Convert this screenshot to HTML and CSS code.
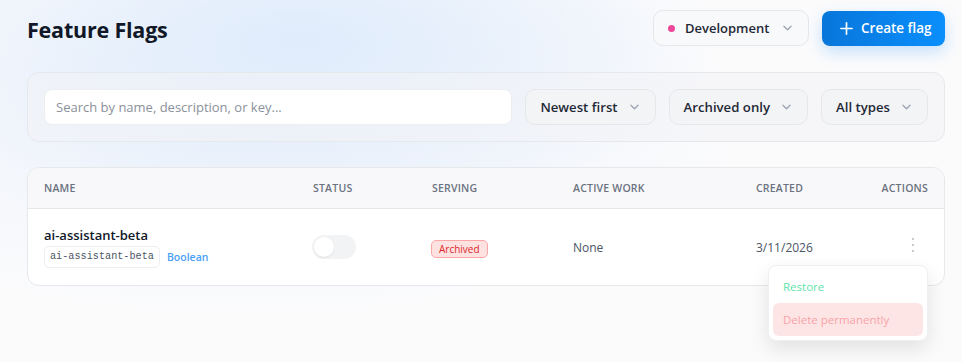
FILE: index.html
```html
<!DOCTYPE html>
<html lang="en">
<head>
    <meta charset="UTF-8">
    <meta name="viewport" content="width=device-width, initial-scale=1.0">
    <title>Feature Flags</title>
    <link rel="stylesheet" href="styles.css">
</head>
<body>
    <div class="page">
        <div class="page-header">
            <h1>Feature Flags</h1>
            <div class="header-actions">
                <button class="env-select">
                    <span class="env-dot"></span>
                    <span>Development</span>
                    <svg class="chev" viewBox="0 0 10 6"><path d="M1 1l4 4 4-4"/></svg>
                </button>
                <button class="btn-create">
                    <svg class="plus" viewBox="0 0 14 14"><path d="M7 1v12M1 7h12"/></svg>
                    Create flag
                </button>
            </div>
        </div>

        <div class="filters">
            <input class="search" type="text" placeholder="Search by name, description, or key...">
            <button class="filter-select">Newest first <svg class="chev" viewBox="0 0 10 6"><path d="M1 1l4 4 4-4"/></svg></button>
            <button class="filter-select">Archived only <svg class="chev" viewBox="0 0 10 6"><path d="M1 1l4 4 4-4"/></svg></button>
            <button class="filter-select">All types <svg class="chev" viewBox="0 0 10 6"><path d="M1 1l4 4 4-4"/></svg></button>
        </div>

        <div class="flags-card">
            <div class="flags-row flags-head">
                <div>Name</div>
                <div>Status</div>
                <div>Serving</div>
                <div>Active work</div>
                <div>Created</div>
                <div class="col-actions">Actions</div>
            </div>
            <div class="flags-row flag-item">
                <div class="flag-name">
                    <div class="name">ai-assistant-beta</div>
                    <div class="meta">
                        <code class="key">ai-assistant-beta</code>
                        <span class="type">Boolean</span>
                    </div>
                </div>
                <div><span class="toggle"><span class="knob"></span></span></div>
                <div><span class="badge-archived">Archived</span></div>
                <div class="muted">None</div>
                <div class="muted">3/11/2026</div>
                <div class="col-actions">
                    <svg class="kebab" viewBox="0 0 4 16"><circle cx="2" cy="2" r="1"/><circle cx="2" cy="8" r="1"/><circle cx="2" cy="14" r="1"/></svg>
                </div>
                <div class="row-menu">
                    <div class="menu-item restore">Restore</div>
                    <div class="menu-item danger">Delete permanently</div>
                </div>
            </div>
        </div>
    </div>
</body>
</html>
```

FILE: styles.css
```css
* {
    box-sizing: border-box;
    margin: 0;
    padding: 0;
    font-family: 'Open Sans', 'Noto Sans', sans-serif;
}

html, body {
    height: 100%;
}

body {
    background:
        radial-gradient(ellipse 420px 180px at 300px 40px, rgba(220, 234, 252, 0.85), rgba(220, 234, 252, 0) 100%),
        radial-gradient(ellipse 500px 200px at 250px 120px, rgba(226, 236, 250, 0.6), rgba(226, 236, 250, 0) 100%),
        #fbfbfc;
    color: #111827;
}

.page {
    padding: 10px 17px 0 27px;
}

.page-header {
    display: flex;
    justify-content: space-between;
    align-items: center;
    height: 36px;
}

.page-header h1 {
    font-size: 21.5px;
    font-weight: 700;
    color: #111827;
    letter-spacing: -0.2px;
    margin-top: 3px;
}

.header-actions {
    display: flex;
    gap: 13px;
    align-items: center;
}

button {
    border: none;
    background: none;
    cursor: pointer;
}

.chev {
    width: 9px;
    height: 6px;
    fill: none;
    stroke: #9ca3af;
    stroke-width: 1.4;
    stroke-linecap: round;
    stroke-linejoin: round;
}

.env-select {
    display: flex;
    align-items: center;
    height: 36px;
    width: 156px;
    padding: 0 16px 0 14px;
    background: #f8f9fa;
    border: 1px solid #e5e7eb;
    border-radius: 10px;
    font-size: 13px;
    font-weight: 600;
    color: #1f2937;
}

.env-dot {
    width: 7px;
    height: 7px;
    border-radius: 50%;
    background: #ec4899;
    margin-right: 10px;
}

.env-select .chev {
    margin-left: auto;
}

.btn-create {
    display: flex;
    align-items: center;
    gap: 8px;
    height: 35px;
    width: 123px;
    padding: 0 0 0 18px;
    border-radius: 8px;
    background: linear-gradient(90deg, #0876da, #0a8ffc);
    box-shadow: 0 6px 16px rgba(10, 130, 250, 0.22);
    color: #fff;
    font-size: 13.5px;
    font-weight: 600;
}

.plus {
    width: 13px;
    height: 13px;
    stroke: #fff;
    stroke-width: 1.8;
    stroke-linecap: round;
}

.filters {
    display: flex;
    gap: 13px;
    margin-top: 26px;
    padding: 16px;
    background: rgba(242, 243, 245, 0.55);
    border: 1px solid #e6e8eb;
    border-radius: 12px;
}

.search {
    flex: 1;
    height: 36px;
    padding: 0 11px;
    border: 1px solid #eceef1;
    border-radius: 8px;
    background: #fff;
    font-size: 13px;
    color: #111827;
    outline: none;
}

.search::placeholder {
    color: #8b919b;
}

.filter-select {
    display: flex;
    align-items: center;
    gap: 12px;
    height: 36px;
    padding: 0 16px 0 14px;
    background: #f3f4f6;
    border: 1px solid #e5e7eb;
    border-radius: 10px;
    font-size: 13.2px;
    font-weight: 600;
    color: #1f2937;
}

.flags-card {
    margin-top: 25px;
    border: 1px solid #e6e8eb;
    border-radius: 12px;
    background: #fff;
}

.flags-row {
    display: grid;
    grid-template-columns: 269px 119px 141px 183px 1fr 60px;
    align-items: center;
    padding: 0 16px;
}

.flags-head {
    height: 41px;
    background: rgba(243, 244, 246, 0.6);
    border-bottom: 1px solid #e5e7eb;
    border-radius: 12px 12px 0 0;
    font-size: 10.5px;
    font-weight: 600;
    color: #6b7280;
    text-transform: uppercase;
    letter-spacing: 0.2px;
}

.col-actions {
    text-align: right;
}

.flag-item {
    position: relative;
    height: 76px;
}

.flag-name .name {
    font-size: 13px;
    font-weight: 600;
    color: #111827;
}

.flag-name .meta {
    display: flex;
    align-items: center;
    gap: 7px;
    margin-top: 2px;
}

.key {
    font-family: 'Liberation Mono', 'DejaVu Sans Mono', monospace;
    font-size: 10.2px;
    color: #4b5563;
    padding: 4px 5px 5px;
    border: 1px solid #eceef1;
    border-radius: 5px;
    background: #fff;
}

.type {
    font-size: 10.5px;
    font-weight: 600;
    color: #4a9ff5;
}

.toggle {
    display: block;
    width: 44px;
    height: 24px;
    border-radius: 12px;
    background: #f2f3f5;
    position: relative;
    margin-left: -1px;
}

.knob {
    position: absolute;
    top: 2px;
    left: 2px;
    width: 20px;
    height: 20px;
    border-radius: 50%;
    background: #fff;
    box-shadow: 0 1px 2px rgba(0, 0, 0, 0.08);
}

.badge-archived {
    display: inline-block;
    padding: 1px 7px;
    margin-left: -1px;
    font-size: 10px;
    font-weight: 500;
    color: #dc2626;
    background: #fee2e2;
    border: 1px solid #fca5a5;
    border-radius: 5px;
}

.muted {
    font-size: 12px;
    color: #4b5563;
}

.kebab {
    width: 4px;
    height: 16px;
    fill: #b4b9c1;
    margin-right: 13px;
}

.row-menu {
    position: absolute;
    top: 56px;
    right: 16px;
    width: 160px;
    padding: 4px;
    background: #fff;
    border: 1px solid #eef0f2;
    border-radius: 8px;
    box-shadow: 0 8px 20px rgba(0, 0, 0, 0.1);
    z-index: 2;
}

.menu-item {
    height: 33px;
    display: flex;
    align-items: center;
    padding: 0 10px;
    font-size: 11.5px;
    border-radius: 6px;
}

.menu-item.restore {
    color: #5fe3a8;
}

.menu-item.danger {
    color: #f9a3a6;
    background: #fde5e6;
}
```
